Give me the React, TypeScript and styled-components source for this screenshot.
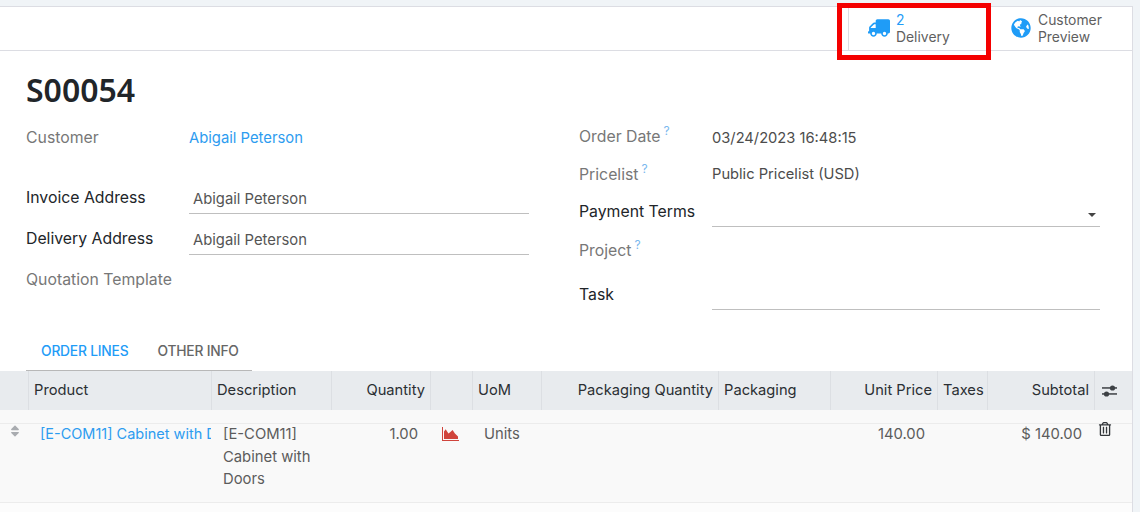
import React from 'react';
import styled, { createGlobalStyle } from 'styled-components';
import { FaTruck, FaGlobeAmericas, FaRegTrashAlt, FaSort } from 'react-icons/fa';

const Global = createGlobalStyle`
  html, body { margin: 0; padding: 0; height: 512px; overflow: hidden; background: #f0f4f7; }
  body { font-family: "Inter", "Roboto", "Liberation Sans", sans-serif; font-size: 14.8px; color: #666; }
  * { box-sizing: border-box; }
`;

const Page = styled.div`
  position: relative;
  height: 512px;
  padding: 6px 7px 0 0;
`;
const Sheet = styled.div`
  height: 506px;
  background: #fff;
  border-top: 1px solid #dcdde3;
  border-right: 1px solid #dcdde3;
  overflow: hidden;
`;
const ButtonBox = styled.div`
  height: 44px;
  display: flex;
  justify-content: flex-end;
  border-bottom: 1px solid #dcdde3;
`;
const StatButton = styled.div<{ $w: number; $pad: number; $gap: number; $border?: boolean }>`
  width: ${p => p.$w}px;
  display: flex;
  align-items: center;
  gap: ${p => p.$gap}px;
  padding: 0 0 2px ${p => p.$pad}px;
  border-left: ${p => (p.$border ? '1px solid #dcdde3' : 'none')};
  svg { color: #1f9cf7; flex: none; }
`;
const TruckIcon = styled(FaTruck)`
  transform: scaleX(-1);
`;
const StatText = styled.div`
  font-size: 13.9px;
  line-height: 17px;
  color: #5f5f5f;
  padding-top: 2px;
`;
const StatValue = styled.div`
  color: #1f9cf7;
`;
const RedFrame = styled.div`
  position: absolute;
  left: 837px;
  top: 3px;
  width: 154px;
  height: 57px;
  border: 5px solid #f40000;
`;
const Title = styled.h1`
  margin: 0;
  padding: 19px 0 0 26px;
  height: 68px;
  font-family: "Noto Sans", "Open Sans", sans-serif;
  font-size: 32px;
  line-height: 40px;
  font-weight: 600;
  color: #212529;
`;
const Columns = styled.div`
  display: flex;
  padding-left: 26px;
  height: 211px;
`;
const LeftGroup = styled.div`
  width: 553px;
  display: flex;
  flex-direction: column;
  padding-top: 9px;
`;
const RightGroup = styled.div`
  width: 521px;
  display: flex;
  flex-direction: column;
  padding-top: 8px;
`;
const FieldRow = styled.div<{ $h: number; $left: number; $width: number }>`
  display: grid;
  grid-template-columns: ${p => p.$left}px ${p => p.$width}px;
  height: ${p => p.$h}px;
  align-items: start;
`;
const Label = styled.label<{ $strong?: boolean; $top?: number }>`
  font-size: 15.8px;
  line-height: 20px;
  padding-top: ${p => p.$top ?? 0}px;
  color: ${p => (p.$strong ? '#212529' : '#777')};
`;
const Help = styled.sup`
  color: #7ab8ee;
  font-size: 12px;
  margin-left: 3px;
  line-height: 0;
  position: relative;
  top: -1px;
`;
const Link = styled.a`
  color: #2d9cf0;
  font-size: 14.8px;
  line-height: 20px;
`;
const Value = styled.div<{ $top?: number }>`
  color: #4c4c4c;
  font-size: 14.7px;
  line-height: 20px;
  padding-top: ${p => p.$top ?? 0}px;
`;
const Input = styled.div<{ $h: number }>`
  height: ${p => p.$h}px;
  border-bottom: 1px solid #bfbfbf;
  padding: 0 0 0 4px;
  font-size: 14.8px;
  line-height: 20px;
  color: #555;
  position: relative;
  margin-top: 1px;
`;
const Caret = styled.span`
  position: absolute;
  right: 4px;
  top: 10px;
  border-top: 4px solid #444;
  border-left: 4px solid transparent;
  border-right: 4px solid transparent;
`;
const Tabs = styled.div`
  display: flex;
  margin-left: 26px;
  width: 226px;
  height: 41px;
  border-bottom: 1px solid #b8b8b8;
  padding: 2px 0 0 15px;
  gap: 29px;
  align-items: center;
`;
const Tab = styled.div<{ $active?: boolean }>`
  font-size: 13.8px;
  font-weight: 500;
  color: ${p => (p.$active ? '#1f9cf7' : '#666')};
  letter-spacing: -0.2px;
`;
const cols = '28px 183px 120px 99px 42px 69px 177px 112px 107px 50px 107px 38px';
const HeadRow = styled.div`
  display: grid;
  grid-template-columns: ${cols};
  height: 39px;
  background: #e8ebee;
`;
const HeadCell = styled.div<{ $right?: boolean }>`
  border-left: 1px solid #dcdfe3;
  font-size: 14.7px;
  line-height: 38px;
  color: #2b2f33;
  padding: 0 5px;
  white-space: nowrap;
  overflow: hidden;
  text-align: ${p => (p.$right ? 'right' : 'left')};
  &:first-child { border-left: 0; }
`;
const SliderIcon = styled.svg`
  width: 15px;
  height: 12px;
  margin: 14px 0 0 2px;
  display: block;
  color: #3d4145;
`;
const Spacer = styled.div`
  height: 14px;
  background: #f9f9f9;
  border-bottom: 1px solid #ececec;
`;
const BodyRow = styled.div`
  display: grid;
  grid-template-columns: ${cols};
  height: 79px;
  background: #f9f9f9;
  border-bottom: 1px solid #ececec;
`;
const Cell = styled.div<{ $right?: boolean; $blue?: boolean }>`
  font-size: ${p => (p.$blue ? 14.5 : 14.8)}px;
  line-height: 22.5px;
  margin-top: -1px;
  padding: 0 0 0 12px;
  white-space: nowrap;
  overflow: hidden;
  color: ${p => (p.$blue ? '#2d9cf0' : '#5c5c5c')};
  text-align: ${p => (p.$right ? 'right' : 'left')};
  padding-right: ${p => (p.$right ? 12 : 0)}px;
`;
const Wrapped = styled(Cell)`
  white-space: normal;
  padding-right: 12px;
`;
const HandleCell = styled.div`
  color: #a9acb0;
  padding: 0 0 0 8px;
  line-height: 0;
`;
const ChartCell = styled.div`
  padding: 3px 0 0 12px;
  line-height: 0;
`;
const ChartIcon = styled.svg`
  width: 17px;
  height: 14px;
  color: #d0443c;
`;
const TrashCell = styled.div`
  color: #33373b;
  padding: 0 0 0 4px;
  line-height: 0;
  margin-top: -2px;
`;
const Tail = styled.div`
  height: 12px;
  background: #fcfcfc;
`;

export default function App() {
  return (
    <Page>
      <Global />
      <Sheet>
        <ButtonBox>
          <StatButton $w={143} $pad={19} $gap={6} $border>
            <TruckIcon size={22} />
            <StatText><StatValue>2</StatValue>Delivery</StatText>
          </StatButton>
          <StatButton $w={141} $pad={20} $gap={7}>
            <FaGlobeAmericas size={20} />
            <StatText>Customer<br />Preview</StatText>
          </StatButton>
        </ButtonBox>
        <Title>S00054</Title>
        <Columns>
          <LeftGroup>
            <FieldRow $h={60} $left={163} $width={340}>
              <Label>Customer</Label>
              <Link>Abigail Peterson</Link>
            </FieldRow>
            <FieldRow $h={41} $left={163} $width={340}>
              <Label $strong>Invoice Address</Label>
              <Input $h={25}>Abigail Peterson</Input>
            </FieldRow>
            <FieldRow $h={41} $left={163} $width={340}>
              <Label $strong>Delivery Address</Label>
              <Input $h={25}>Abigail Peterson</Input>
            </FieldRow>
            <FieldRow $h={41} $left={163} $width={340}>
              <Label>Quotation Template</Label>
            </FieldRow>
          </LeftGroup>
          <RightGroup>
            <FieldRow $h={37} $left={133} $width={388}>
              <Label>Order Date<Help>?</Help></Label>
              <Value $top={1}>03/24/2023 16:48:15</Value>
            </FieldRow>
            <FieldRow $h={38} $left={133} $width={388}>
              <Label $top={1}>Pricelist<Help>?</Help></Label>
              <Value>Public Pricelist (USD)</Value>
            </FieldRow>
            <FieldRow $h={39} $left={133} $width={388}>
              <Label $strong>Payment Terms</Label>
              <Input $h={24}><Caret /></Input>
            </FieldRow>
            <FieldRow $h={44} $left={133} $width={388}>
              <Label>Project<Help>?</Help></Label>
            </FieldRow>
            <FieldRow $h={40} $left={133} $width={388}>
              <Label $strong>Task</Label>
              <Input $h={24} />
            </FieldRow>
          </RightGroup>
        </Columns>
        <Tabs>
          <Tab $active>ORDER LINES</Tab>
          <Tab>OTHER INFO</Tab>
        </Tabs>
        <HeadRow>
          <HeadCell />
          <HeadCell>Product</HeadCell>
          <HeadCell>Description</HeadCell>
          <HeadCell $right>Quantity</HeadCell>
          <HeadCell />
          <HeadCell>UoM</HeadCell>
          <HeadCell $right>Packaging Quantity</HeadCell>
          <HeadCell>Packaging</HeadCell>
          <HeadCell $right>Unit Price</HeadCell>
          <HeadCell>Taxes</HeadCell>
          <HeadCell $right>Subtotal</HeadCell>
          <HeadCell>
            <SliderIcon viewBox="0 0 15 12" fill="currentColor">
              <rect x="0" y="2.2" width="15" height="1.5" />
              <rect x="0" y="8.2" width="15" height="1.5" />
              <circle cx="10.5" cy="3" r="2.6" />
              <circle cx="4.5" cy="9" r="2.6" />
            </SliderIcon>
          </HeadCell>
        </HeadRow>
        <Spacer />
        <BodyRow>
          <HandleCell><FaSort size={14} /></HandleCell>
          <Cell $blue>[E-COM11] Cabinet with Doors</Cell>
          <Wrapped>[E-COM11] Cabinet with Doors</Wrapped>
          <Cell $right>1.00</Cell>
          <ChartCell>
            <ChartIcon viewBox="0 0 17 14" fill="currentColor">
              <path d="M0 0h1v13h16v1H0z" />
              <path d="M2 12V4.5L3.7 2.2 6.4 6.4 8.4 5l2.2-2 2.3 3.6L16 9.5V12z" />
            </ChartIcon>
          </ChartCell>
          <Cell>Units</Cell>
          <Cell />
          <Cell />
          <Cell $right>140.00</Cell>
          <Cell />
          <Cell $right>$ 140.00</Cell>
          <TrashCell><FaRegTrashAlt size={14} /></TrashCell>
        </BodyRow>
        <Tail />
      </Sheet>
      <RedFrame />
    </Page>
  );
}
